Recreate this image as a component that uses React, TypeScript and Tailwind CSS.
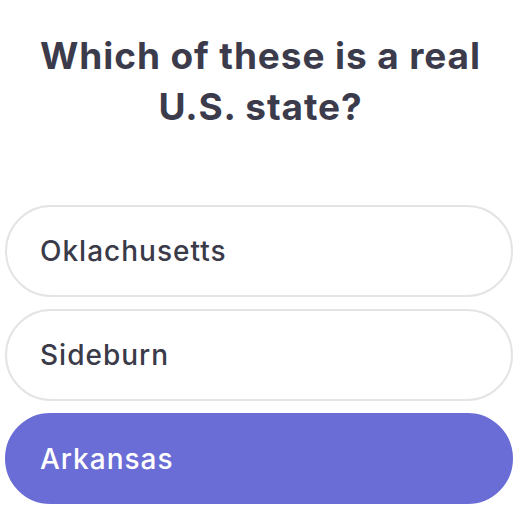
import React from 'react';

const options = [
  { label: 'Oklachusetts', selected: false },
  { label: 'Sideburn', selected: false },
  { label: 'Arkansas', selected: true },
];

export default function App() {
  return (
    <div className="w-[521px] h-[515px] bg-white overflow-hidden" style={{ fontFamily: 'Inter, "Noto Sans", sans-serif' }}>
      <h1 className="pt-[30px] px-2 text-center text-[37px] leading-[51px] font-bold text-[#3b3b4c] tracking-[0.9px]">
        Which of these is a real
        <br />
        U.S. state?
      </h1>

      <div className="mt-[73px] pl-[5px] pr-[8px] flex flex-col gap-[12px]">
        {options.map((opt) => (
          <button
            key={opt.label}
            className={
              opt.selected
                ? 'h-[91px] w-full rounded-full bg-[#6a6dd5] border-2 border-[#6a6dd5] pl-[33px] text-left text-[28px] font-medium tracking-[1px] text-white'
                : 'h-[92px] w-full rounded-full bg-white border-2 border-[#e4e4e4] pl-[33px] text-left text-[28px] font-medium tracking-[1px] text-[#3a3a48]'
            }
          >
            {opt.label}
          </button>
        ))}
      </div>
    </div>
  );
}
